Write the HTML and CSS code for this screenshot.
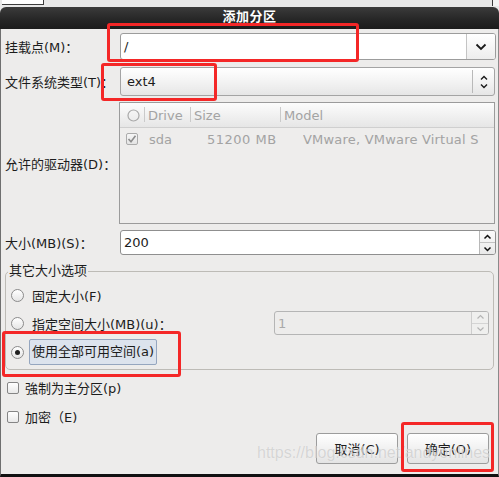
FILE: index.html
```html
<!DOCTYPE html>
<html lang="zh-CN">
<head>
<meta charset="utf-8">
<title>添加分区</title>
<link rel="stylesheet" href="styles.css">
</head>
<body>
<div class="screen">
  <div class="strip"><div class="behind"></div><div class="behind-r"></div></div>
  <div class="titlebar">添加分区</div>
  <div class="content">
    <div class="row r-mount">
      <div class="lbl">挂载点(M)：</div>
      <div class="combo-entry">
        <div class="entry-text">/</div>
        <div class="drop-btn">
          <svg width="12" height="8" viewBox="0 0 12 8"><polyline points="1.5,1.5 6,6 10.5,1.5" fill="none" stroke="#1a1a1a" stroke-width="1.8"/></svg>
        </div>
      </div>
    </div>

    <div class="row r-fs">
      <div class="lbl">文件系统类型(T)：</div>
      <div class="combo-btn">
        <div class="combo-text">ext4</div>
        <div class="combo-sep"></div>
        <div class="updown">
          <svg width="10" height="16" viewBox="0 0 10 16"><polyline points="2,5.5 5,2.5 8,5.5" fill="none" stroke="#1a1a1a" stroke-width="1.4"/><polyline points="2,10.5 5,13.5 8,10.5" fill="none" stroke="#1a1a1a" stroke-width="1.4"/></svg>
        </div>
      </div>
    </div>

    <div class="row r-drives">
      <div class="lbl">允许的驱动器(D)：</div>
      <div class="drives">
        <div class="dhead">
          <div class="hc hc-check"><svg width="13" height="13" viewBox="0 0 13 13"><circle cx="6.5" cy="6.5" r="5.5" fill="none" stroke="#a9a9a9" stroke-width="1.2"/></svg></div>
          <div class="hc hc-drive">Drive</div>
          <div class="hc hc-size">Size</div>
          <div class="hc hc-model">Model</div>
        </div>
        <div class="drow">
          <div class="dc dc-check"><span class="dcheck"><svg width="10" height="10" viewBox="0 0 10 10"><polyline points="1.5,5 4,7.8 8.5,1.8" fill="none" stroke="#8d8d8d" stroke-width="1.6"/></svg></span></div>
          <div class="dc dc-drive">sda</div>
          <div class="dc dc-size">51200 MB</div>
          <div class="dc dc-model">VMware, VMware Virtual S</div>
        </div>
      </div>
    </div>

    <div class="row r-size">
      <div class="lbl">大小(MB)(S)：</div>
      <div class="spin">
        <div class="spin-text">200</div>
        <div class="spin-btns">
          <div class="sb sb-up"><svg width="9" height="6" viewBox="0 0 9 6"><polyline points="1.5,4.5 4.5,1.5 7.5,4.5" fill="none" stroke="#111" stroke-width="1.5"/></svg></div>
          <div class="sb"><svg width="9" height="6" viewBox="0 0 9 6"><polyline points="1.5,1.5 4.5,4.5 7.5,1.5" fill="none" stroke="#111" stroke-width="1.5"/></svg></div>
        </div>
      </div>
    </div>

    <fieldset class="frame">
      <legend class="frame-title">其它大小选项</legend>
      <div class="opt">
        <span class="radio"></span><span class="opt-text">固定大小(F)</span>
      </div>
      <div class="opt">
        <span class="radio"></span><span class="opt-text">指定空间大小(MB)(u)：</span>
        <div class="spin spin-dis">
          <div class="spin-text">1</div>
          <div class="spin-btns">
            <div class="sb sb-up"><svg width="9" height="6" viewBox="0 0 9 6"><polyline points="1.5,4.5 4.5,1.5 7.5,4.5" fill="none" stroke="#b4b4b4" stroke-width="1.2"/></svg></div>
            <div class="sb"><svg width="9" height="6" viewBox="0 0 9 6"><polyline points="1.5,1.5 4.5,4.5 7.5,1.5" fill="none" stroke="#b4b4b4" stroke-width="1.2"/></svg></div>
          </div>
        </div>
      </div>
      <div class="opt opt-last">
        <span class="radio radio-on"><span class="dot"></span></span><span class="opt-text hl">使用全部可用空间(a)</span>
      </div>
    </fieldset>

    <div class="chk-row chk-first"><span class="cbox"></span><span>強制为主分区(p)</span></div>
    <div class="chk-row"><span class="cbox"></span><span>加密（E)</span></div>

    <div class="buttons">
      <div class="btn">取消(C)</div>
      <div class="btn">确定(O)</div>
    </div>
  </div>

  <div class="watermark">https://blog.csdn.net/andyonlines</div>

  <div class="mark mark-mount"></div>
  <div class="mark mark-fs"></div>
  <div class="mark mark-all"></div>
  <div class="mark mark-ok"></div>
</div>
</body>
</html>
```

FILE: styles.css
```css
html, body {
  margin: 0;
  padding: 0;
}

body {
  font-family: "DejaVu Sans", "Noto Sans CJK SC", sans-serif;
  font-size: 13px;
  color: #1c1c1c;
}

.screen {
  width: 499px;
  height: 477px;
  overflow: hidden;
  position: relative;
  background: #e8e8e8;
}

/* window behind */
.strip {
  height: 7px;
  display: flex;
}

.behind {
  margin-left: 2px;
  width: 41px;
  height: 4px;
  background: #ffffff;
  border-right: 1px solid #3c3c3c;
  border-bottom: 1px solid #3c3c3c;
}

.behind-r {
  margin-left: auto;
  width: 6px;
  height: 6px;
  border-left: 1px solid #3c3c3c;
  background: #f4f4f4;
}

/* title bar */
.titlebar {
  height: 22px;
  background: linear-gradient(#3b3b3b, #272727 55%, #1c1c1c);
  border-radius: 6px 6px 0 0;
  color: #ffffff;
  font-weight: bold;
  font-size: 13px;
  line-height: 19px;
  text-align: center;
  letter-spacing: 0.5px;
}

/* dialog body */
.content {
  box-sizing: border-box;
  height: 448px;
  background: #edeceb;
  border-left: 1px solid #6f6f6f;
  border-right: 1px solid #8a8a8a;
  border-bottom: 3px solid #111111;
  padding: 4px 2px 0 4px;
}

.row {
  display: flex;
  align-items: center;
}

.lbl {
  width: 115px;
  flex: none;
  white-space: nowrap;
}

/* mount point */
.r-mount {
  height: 27px;
}

.combo-entry {
  flex: 1;
  align-self: stretch;
  display: flex;
  box-sizing: border-box;
  background: #ffffff;
  border: 1px solid #9c9c9c;
  border-radius: 3px;
}

.entry-text {
  flex: 1;
  padding-left: 3px;
  display: flex;
  align-items: center;
}

.drop-btn {
  width: 28px;
  border-left: 1px solid #c4c4c4;
  background: linear-gradient(#ffffff, #ededed);
  border-radius: 0 2px 2px 0;
  display: flex;
  align-items: center;
  justify-content: center;
}

/* filesystem */
.r-fs {
  margin-top: 7px;
  height: 29px;
}

.combo-btn {
  flex: 1;
  align-self: stretch;
  display: flex;
  align-items: center;
  box-sizing: border-box;
  margin-right: 1px;
  border: 1px solid #a4a4a4;
  border-radius: 3px;
  background: linear-gradient(#ffffff, #f3f3f3 50%, #e6e6e6);
}

.combo-text {
  flex: 1;
  padding-left: 6px;
}

.combo-sep {
  width: 1px;
  height: 23px;
  background: #b9b9b9;
}

.updown {
  width: 21px;
  display: flex;
  justify-content: center;
  align-items: center;
}

/* drives */
.r-drives {
  margin-top: 6px;
  height: 122px;
}

.drives {
  flex: 1;
  align-self: stretch;
  margin-left: -1px;
  margin-right: 1px;
  box-sizing: border-box;
  border: 1px solid #9b9b9b;
  background: #eeedec;
  color: #a3a3a3;
}

.dhead {
  height: 25px;
  display: grid;
  grid-template-columns: 24px 46px 90px 1fr;
  background: linear-gradient(#fcfcfc, #e6e6e6);
  border-bottom: 1px solid #cfcfcf;
  box-sizing: border-box;
}

.hc {
  display: flex;
  align-items: center;
  padding-left: 4px;
  position: relative;
}

.hc-check {
  padding-left: 7px;
}

.hc + .hc::before {
  content: "";
  position: absolute;
  left: 0;
  top: 4px;
  bottom: 5px;
  width: 1px;
  background: #cacaca;
}

.drow {
  height: 22px;
  display: grid;
  grid-template-columns: 29px 58px 96px 1fr;
  align-items: center;
}

.dc-check {
  padding-left: 6px;
  display: flex;
}

.dcheck {
  width: 12px;
  height: 12px;
  box-sizing: border-box;
  border: 1px solid #ababab;
  border-radius: 2px;
  background: linear-gradient(#f6f6f6, #e4e4e4);
  display: flex;
  align-items: center;
  justify-content: center;
}

.dc-size {
  white-space: nowrap;
  letter-spacing: 0.5px;
}

.dc-model {
  white-space: nowrap;
  overflow: hidden;
  letter-spacing: 0.2px;
}

/* size spin */
.r-size {
  margin-top: 6px;
  height: 25px;
}

.spin {
  flex: 1;
  align-self: stretch;
  display: flex;
  box-sizing: border-box;
  background: #ffffff;
  border: 1px solid #8f8f8f;
  border-radius: 3px;
}

.spin-text {
  flex: 1;
  padding-left: 3px;
  display: flex;
  align-items: center;
}

.spin-btns {
  width: 15px;
  display: flex;
  flex-direction: column;
  border-left: 1px solid #b8b8b8;
  background: linear-gradient(#fbfbfb, #e9e9e9);
  border-radius: 0 2px 2px 0;
}

.sb {
  flex: 1;
  display: flex;
  align-items: center;
  justify-content: center;
}

.sb-up {
  border-bottom: 1px solid #c2c2c2;
}

/* size options frame */
.frame {
  margin: 8px 2px 0 0;
  padding: 2px 4px 3px 5px;
  border: 1px solid #bdbbb6;
  border-radius: 5px;
  min-width: 0;
}

.frame-title {
  padding: 0 1px;
  margin-left: -3px;
  line-height: 16px;
}

.opt {
  display: flex;
  align-items: center;
  height: 28px;
}

.opt-last {
  margin-top: 1px;
}

.radio {
  width: 13px;
  height: 13px;
  flex: none;
  box-sizing: border-box;
  border: 1px solid #8b8b8b;
  border-radius: 50%;
  background: linear-gradient(#ffffff, #e5e5e5);
  margin-right: 5px;
  display: flex;
  align-items: center;
  justify-content: center;
}

.dot {
  width: 5px;
  height: 5px;
  border-radius: 50%;
  background: #1e1e1e;
}

.opt-text {
  padding: 0 3px;
  white-space: nowrap;
}

.hl {
  box-sizing: border-box;
  height: 26px;
  line-height: 24px;
  padding: 0 2px;
  border: 1px solid #95a6bf;
  border-radius: 2px;
  background: #dce3ed;
}

.spin-dis {
  flex: none;
  width: 215px;
  height: 24px;
  align-self: center;
  margin-left: auto;
  background: #edeceb;
  border-color: #b5b5b5;
  color: #a9a9a9;
}

.spin-dis .spin-btns {
  width: 16px;
  border-left-color: #cdcdcd;
  background: #efefee;
}

.spin-dis .sb-up {
  border-bottom-color: #d4d4d4;
}

/* checkboxes */
.chk-row {
  display: flex;
  align-items: center;
  height: 29px;
  padding-left: 2px;
}

.chk-first {
  margin-top: 3px;
}

.cbox {
  width: 12px;
  height: 12px;
  box-sizing: border-box;
  border: 1px solid #858585;
  border-radius: 2px;
  background: linear-gradient(#ffffff, #e9e9e9);
  margin-right: 6px;
}

/* buttons */
.buttons {
  margin-top: 2px;
  display: flex;
  justify-content: flex-end;
  gap: 9px;
  padding-right: 7px;
}

.btn {
  width: 82px;
  height: 31px;
  box-sizing: border-box;
  border: 1px solid #9c9c9c;
  border-radius: 3px;
  background: linear-gradient(#ffffff, #f1f1f1 50%, #e4e4e4);
  display: flex;
  align-items: center;
  justify-content: center;
}

/* overlays */
.watermark {
  position: absolute;
  left: 257px;
  top: 444px;
  font-family: "Liberation Sans", sans-serif;
  font-size: 16px;
  color: rgba(190, 190, 190, 0.6);
  text-shadow: 0 0 1px rgba(255, 255, 255, 0.7);
  white-space: nowrap;
  pointer-events: none;
}

.mark {
  position: absolute;
  box-sizing: border-box;
  border: 3px solid #f42727;
  border-radius: 3px;
}

.mark-mount {
  left: 107px;
  top: 23px;
  width: 252px;
  height: 39px;
}

.mark-fs {
  left: 101px;
  top: 63px;
  width: 116px;
  height: 38px;
}

.mark-all {
  left: 2px;
  top: 331px;
  width: 179px;
  height: 46px;
}

.mark-ok {
  left: 401px;
  top: 422px;
  width: 93px;
  height: 50px;
}
```
